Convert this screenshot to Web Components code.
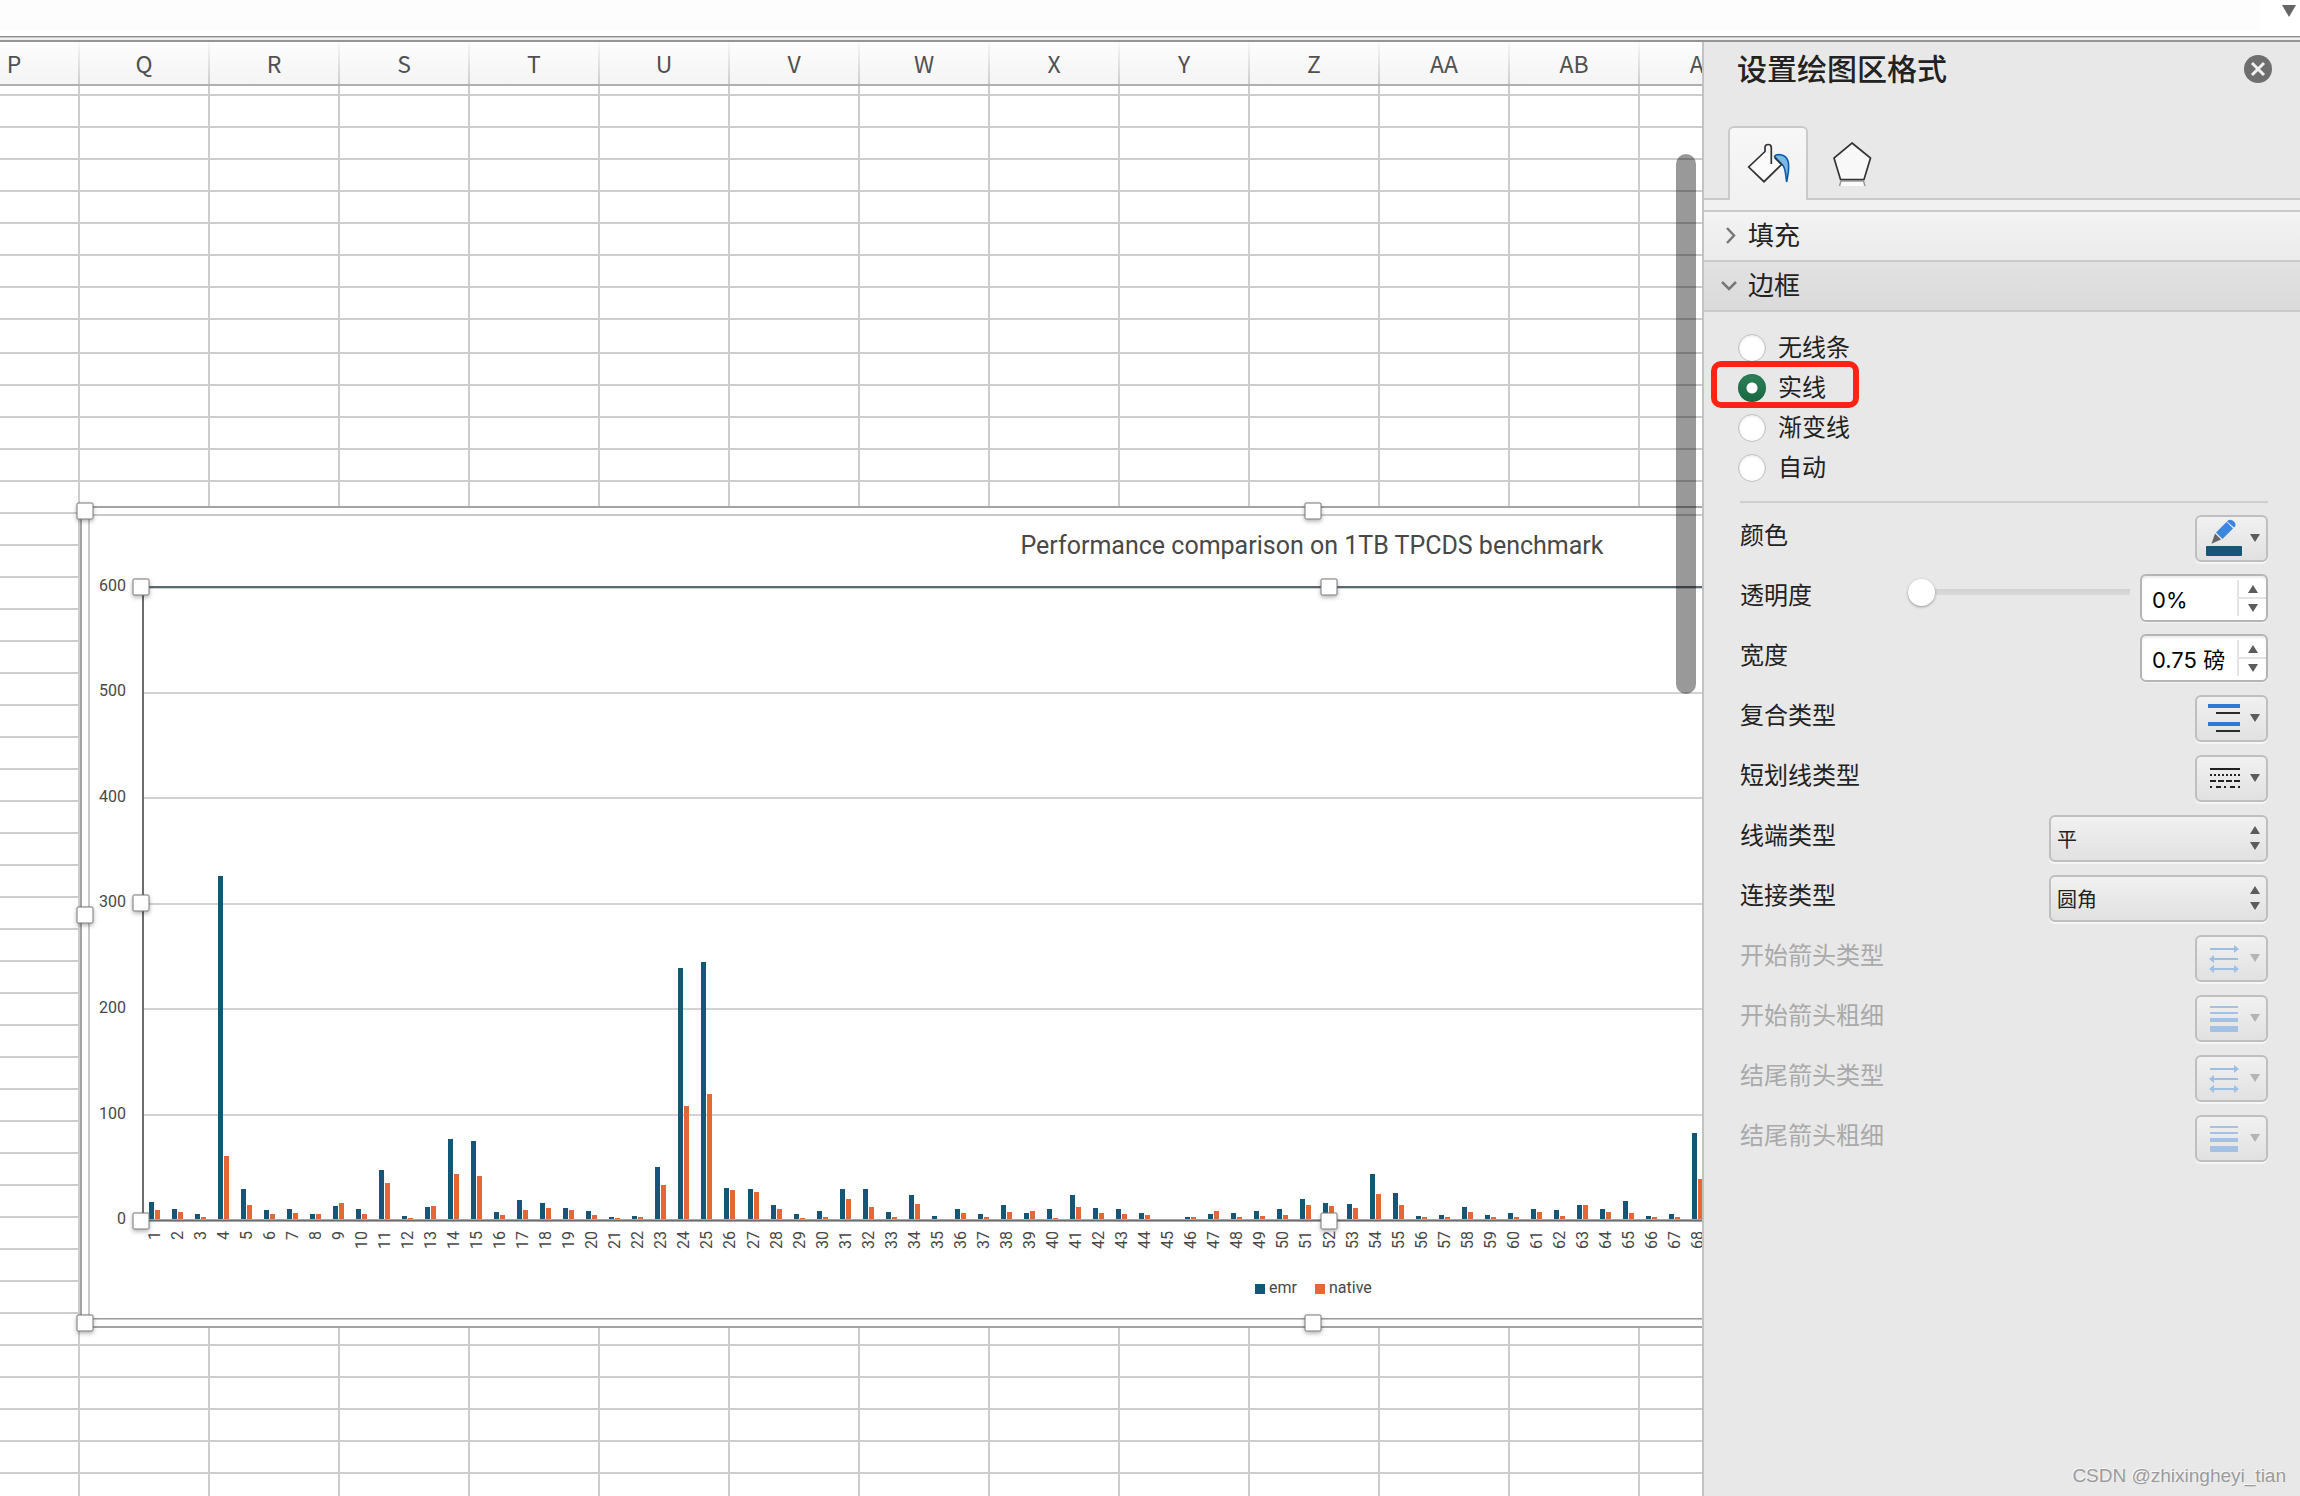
<!DOCTYPE html>
<html lang="zh-CN">
<head>
<meta charset="utf-8">
<title>设置绘图区格式</title>
<style>
  html, body { margin: 0; height: 100%; }
  body { font-family: "Noto Sans CJK SC", sans-serif; background: #fff; overflow: hidden; }
</style>
</head>
<body>
<excel-window></excel-window>
<script>
class ShadowElement extends HTMLElement {
  connectedCallback() {
    if (this.shadowRoot) return;
    this.attachShadow({ mode: "open" }).innerHTML = "<style>*{box-sizing:border-box}</style>" + this.render();
  }
  attr(name) { return this.getAttribute(name) || ""; }
}

customElements.define("excel-window", class extends ShadowElement {
  render() {
    return `<style>
      :host { display: flex; flex-direction: column; height: 100vh; }
      main { display: flex; flex: 1; min-height: 0; }
      sheet-view { flex: 1; min-width: 0; }
      format-pane { flex: none; width: 598px; }
    </style>
    <formula-bar></formula-bar>
    <main><sheet-view></sheet-view><format-pane></format-pane></main>`;
  }
});

customElements.define("formula-bar", class extends ShadowElement {
  render() {
    return `<style>
      :host { display: flex; flex-direction: column; height: 42px; flex: none; background: #fff; }
      .bar { display: flex; height: 36px; }
      .field { flex: 1; height: 30px; background: #fdfdfd; }
      button { width: 40px; height: 24px; padding: 0 4px 3px 0; border: 0; background: none; display: flex; justify-content: flex-end; align-items: center; }
      .split { height: 6px; border-top: 1px solid #8c8c8c; border-bottom: 2px solid #959595; background: linear-gradient(#c9c9c9 1px, #f0f0f0 1px); }
    </style>
    <div class="bar"><div class="field"></div>
      <button aria-label="展开编辑栏"><svg width="14" height="12"><path d="M0 0H14L7 12Z" fill="#666"/></svg></button></div>
    <div class="split"></div>`;
  }
});

customElements.define("sheet-view", class extends ShadowElement {
  render() {
    const columns = ["P","Q","R","S","T","U","V","W","X","Y","Z","AA","AB","AC"];
    const rows = Array.from({ length: 44 }, (_, i) =>
      `<div class="row${i === 0 ? " first" : i === 8 ? " tall" : ""}"></div>`).join("");
    return `<style>
      :host { display: flex; flex-direction: column; position: relative; overflow: hidden; background: #fff; }
      .head { display: flex; flex: none; height: 44px; margin-left: -50px; border-bottom: 2px solid #b0b0b0; background: linear-gradient(#fdfdfd, #f4f4f4); }
      .head span { flex: none; width: 130px; padding-right: 2px; text-align: center; font-size: 23px; line-height: 42px; color: #505050;
        background: linear-gradient(#f8f8f8, #cdcdcd) right / 2px 100% no-repeat; }
      .grid { position: relative; flex: 1; min-height: 0;
        background: repeating-linear-gradient(90deg, transparent 0 128px, #cdcdcd 128px 130px) -50px 0 / calc(100% + 50px) 100%; }
      .row { height: 32px; border-bottom: 2px solid #cdcdcd; }
      .first { height: 10px; } .tall { height: 34px; }
      chart-object { position: absolute; left: 80px; top: 420px; }
      .thumb { position: absolute; right: 6px; top: 68px; width: 20px; height: 540px; border-radius: 10px; background: rgba(0,0,0,.4); }
    </style>
    <div class="head">${columns.map(c => `<span>${c}</span>`).join("")}</div>
    <div class="grid">${rows}<chart-object></chart-object><div class="thumb"></div></div>`;
  }
});

customElements.define("chart-object", class extends ShadowElement {
  render() {
    const emr = [18,11,6,344,31,10,11,6,14,11,50,4,13,81,79,8,20,17,12,9,3,4,53,252,258,32,31,15,6,9,31,31,8,25,4,11,6,15,7,11,25,12,11,7,0,3,6,7,9,11,21,17,16,46,27,4,5,13,5,7,11,10,15,11,19,4,6,87];
    const native = [10,8,3,64,15,6,7,6,17,6,37,2,14,46,44,5,10,12,10,5,2,3,35,114,126,30,28,11,2,3,21,13,3,16,1,7,3,8,9,2,13,7,6,5,0,3,9,3,4,5,15,14,12,26,15,3,3,8,3,3,8,4,15,8,7,3,3,41];
    const step = 2373 / 103, left = 63, base = 714;
    const gridTops = [609, 503, 398, 292, 187];
    let marks = "";
    gridTops.forEach(y => { marks += `<rect x="${left}" y="${y - 1}" width="2373" height="2" fill="#d2d2d2"/>`; });
    emr.forEach((h, i) => {
      const x = Math.floor(left + 6 + i * step), n = native[i];
      marks += `<rect x="${x}" y="${base - h}" width="5" height="${h}" fill="#155676"/>`;
      marks += `<rect x="${x + 6}" y="${base - n}" width="5" height="${n}" fill="#e66736"/>`;
    });
    let labels = "";
    emr.forEach((_, i) => {
      const x = Math.round(left + step * (i + .5));
      labels += `<text transform="translate(${x + 5} 725) rotate(-90)" text-anchor="end">${i + 1}</text>`;
    });
    [0,100,200,300,400,500,600].forEach((v, i) => {
      labels += `<text x="46" y="${[718,613,507,401,296,190,85][i]}" text-anchor="end">${v}</text>`;
    });
    const handle = (x, y) => `<rect x="${x - 8}" y="${y - 8}" width="16" height="16" rx="1" fill="#fff" stroke="#777" stroke-width="1" filter="url(#s)"/>`;
    const handles = [[5,5],[1233,5],[5,409],[5,817],[1233,817],[61,81],[1249,81],[61,397],[61,715],[1249,715]];
    return `<style>
      :host { display: block; width: 2466px; height: 822px; background: #fff; }
      svg { display: block; overflow: visible; font-family: Roboto, sans-serif; font-size: 16px; fill: #484848; }
      .title { font-size: 25px; }
    </style>
    <svg width="2466" height="822" role="img" aria-label="Performance comparison on 1TB TPCDS benchmark">
      <defs><filter id="s" x="-50%" y="-50%" width="200%" height="200%"><feDropShadow dx="0" dy="2" stdDeviation="2" flood-opacity=".3"/></filter></defs>
      <rect x="1" y="1" width="2464" height="820" fill="#fff" stroke="#a3a3a3" stroke-width="2"/>
      <rect x="9" y="9" width="2448" height="804" fill="#fff" stroke="#c9c9c9" stroke-width="2"/>
      <rect x="9" y="812" width="2448" height="1" fill="#9c9c9c"/>
      <text class="title" x="1232" y="48" text-anchor="middle">Performance comparison on 1TB TPCDS benchmark</text>
      ${marks}
      <rect x="62" y="80" width="2374" height="2" fill="#5b6b75"/><rect x="64" y="82" width="2372" height="1" fill="#d0d0d0"/>
      <rect x="62" y="80" width="2" height="634" fill="#6d6d6d"/>
      <rect x="62" y="713" width="2374" height="3" fill="#a8a8a8"/><rect x="62" y="714" width="2374" height="1" fill="#6b6b6b"/>
      ${handles.map(p => handle(...p)).join("")}
      ${labels}
      <rect x="1175" y="778" width="10" height="10" fill="#155676"/><text x="1189" y="787">emr</text>
      <rect x="1235" y="778" width="10" height="10" fill="#e66736"/><text x="1249" y="787">native</text>
    </svg>`;
  }
});

customElements.define("format-pane", class extends ShadowElement {
  render() {
    return `<style>
      :host { display: flex; flex-direction: column; position: relative; background: #e8e8e8; border-left: 2px solid #c2c2c2; color: #222; }
      header { display: flex; justify-content: space-between; align-items: center; height: 54px; padding: 0 28px 0 33px; }
      h1 { margin: 0; padding-bottom: 4px; font-size: 30px; line-height: 50px; font-weight: 500; }
      header button { width: 28px; height: 28px; padding: 0; border: 0; background: none; }
      svg { display: block; }
      pane-tabs { margin-top: 30px; }
      .body { padding: 16px 32px 0 34px; }
      hr { margin: 13px 0 5px 2px; border: 0; height: 2px; background: #cfcfcf; }
      .rows { padding-left: 2px; }
      .mark { position: absolute; right: 14px; bottom: 6px; font: 19px/28px "Liberation Sans", sans-serif; color: #9b9b9b; text-shadow: -1px -1px 0 #f8f8f8; }
    </style>
    <header><h1>设置绘图区格式</h1>
      <button aria-label="关闭"><svg width="28" height="28"><circle cx="14" cy="14" r="14" fill="#6e6e6e"/><path d="M8 8L20 20M20 8L8 20" stroke="#f0f0f0" stroke-width="3"/></svg></button></header>
    <pane-tabs></pane-tabs>
    <pane-section>填充</pane-section>
    <pane-section open>边框</pane-section>
    <div class="body">
      <line-choice></line-choice>
      <hr>
      <div class="rows">
        <menu-row label="颜色" icon="pen"></menu-row>
        <stepper-row label="透明度" value="0%" slider></stepper-row>
        <stepper-row label="宽度" value="0.75 磅"></stepper-row>
        <menu-row label="复合类型" icon="compound"></menu-row>
        <menu-row label="短划线类型" icon="dash"></menu-row>
        <select-row label="线端类型" value="平"></select-row>
        <select-row label="连接类型" value="圆角"></select-row>
        <menu-row label="开始箭头类型" icon="arrows" disabled></menu-row>
        <menu-row label="开始箭头粗细" icon="weights" disabled></menu-row>
        <menu-row label="结尾箭头类型" icon="arrows" disabled></menu-row>
        <menu-row label="结尾箭头粗细" icon="weights" disabled></menu-row>
      </div>
    </div>
    <div class="mark">CSDN @zhixingheyi_tian</div>`;
  }
});

customElements.define("pane-tabs", class extends ShadowElement {
  render() {
    return `<style>
      :host { display: block; height: 86px; background: #f1f1f1; border-bottom: 2px solid #cacaca; }
      nav { display: flex; height: 74px; padding-left: 24px; background: #e8e8e8; box-shadow: inset 0 -2px #cacaca; }
      button { width: 80px; height: 74px; padding: 0; border: 2px solid transparent; border-bottom: 0; background: none; }
      button.on { border-color: #cacaca; border-radius: 6px 6px 0 0; background: linear-gradient(#f7f7f7, #f1f1f1); }
      svg { display: block; }
    </style>
    <nav role="tablist">
      <button class="on" role="tab" aria-selected="true" aria-label="填充与线条"><svg width="76" height="72" viewBox="10 8 76 72">
        <path d="M44.7 31.5L28.7 47L44 61.5L61 44.5L54 37" fill="#fbfbfb"/>
        <path d="M54.5 36.5C56 34 65 33 68 41C70 49 67.5 56 66.700 62C65.500 56 66 47 62 44.500Z" fill="#7db9e8" stroke="#0a5ca8" stroke-width="1.600"/>
        <path d="M51.300 44V27.500C51.300 23.500 45 23.500 45 27.500V31.500L28.700 47L44 61.700L61.500 44.500L54.500 37.500" fill="none" stroke="#333" stroke-width="1.700"/>
      </svg></button>
      <button role="tab" aria-label="效果"><svg width="76" height="72" viewBox="90 8 76 72">
        <path d="M119.500 66L121 61H143.500L145 66" fill="#fafafa" stroke="#999" stroke-width="1.500"/>
        <path d="M132 23L150.500 38L144 59.500H120.500L114 38Z" fill="#f8f8f8" stroke="#333" stroke-width="1.700"/>
      </svg></button>
    </nav>`;
  }
});

customElements.define("pane-section", class extends ShadowElement {
  render() {
    const open = this.hasAttribute("open");
    return `<style>
      :host { display: block; }
      button { display: flex; align-items: center; gap: 9px; width: 100%; height: 50px; padding: 0 0 2px 15px; border: 0; border-bottom: 2px solid #cacaca; color: #222;
        font: 26px/40px "Noto Sans CJK SC", sans-serif; background: ${open ? "linear-gradient(#e2e2e2,#dadada)" : "linear-gradient(#f3f3f3,#ebebeb)"}; }
      span { padding-bottom: 3px; }
    </style>
    <button aria-expanded="${open}"><svg width="20" height="20"><path d="${open ? "M3 7L10 14L17 7" : "M8 3L15 10.500L8 18"}" fill="none" stroke="#777" stroke-width="2.500"/></svg><span><slot></slot></span></button>`;
  }
});

customElements.define("line-choice", class extends ShadowElement {
  render() {
    const choices = ["无线条", "实线", "渐变线", "自动"];
    return `<style>
      :host { display: block; }
      fieldset { margin: 0; padding: 0; border: 0; }
      div { position: relative; display: flex; align-items: center; height: 40px; gap: 12px; }
      label { font-size: 24px; line-height: 36px; padding-bottom: 5px; }
      input { appearance: none; width: 28px; height: 28px; margin: 0; border-radius: 50%; border: 1px solid #c0c0c0; background: #fff; box-shadow: inset 0 1px 3px rgba(0,0,0,.12); }
      input:checked { border: 0; background: radial-gradient(circle, #fff 0 5px, transparent 6px), linear-gradient(#2f8159, #176841); }
      .note { position: absolute; left: -27px; top: -7px; width: 148px; height: 47px; border: 6px solid #fe2315; border-radius: 10px; }
    </style>
    <fieldset aria-label="线条">${choices.map((c, i) => `<div><input type="radio" name="line" id="r${i}"${i === 1 ? " checked" : ""}><label for="r${i}">${c}</label>${i === 1 ? '<span class="note"></span>' : ""}</div>`).join("")}</fieldset>`;
  }
});

const rowStyle = `
  :host { display: flex; justify-content: space-between; align-items: center; height: 60px; }
  label { font-size: 24px; line-height: 36px; padding-bottom: 9px; color: #222; }
  :host([disabled]) label { color: #aaa; }
  .face { border: 2px solid #bfbfbf; border-radius: 6px; background: linear-gradient(#f1f1f1, #e1e1e1); box-shadow: 0 2px 0 #f6f6f6; }
`;

const icons = {
  pen: `<path d="M16.500 28.700L20 18.500L26 24.500Z" fill="#666"/><path d="M21 17.500L31.500 7L38 13.500L27.500 24Z" fill="#3a87dd"/><path d="M33 5.500C36 2.500 42.500 8 40 11.500L39 12.500L32 6.500Z" fill="#3a87dd"/><rect x="11" y="31" width="36" height="10" rx="1" fill="#155676"/>`,
  compound: `<path d="M13 11H45M13 29H45" stroke="#2e7ad3" stroke-width="4"/><path d="M21 18H45M21 36H45" stroke="#2b2b2b" stroke-width="2"/>`,
  dash: `<g stroke="#222" stroke-width="2"><path d="M15 14H45"/><path d="M15 20H45" stroke-dasharray="2 2"/><path d="M15 26H45" stroke-dasharray="6 2"/><path d="M15 32H45" stroke-dasharray="2 4 5 3"/></g>`,
  arrows: `<path d="M15 14H40M18 24H43M18 34H40" stroke="#9dbfe2" stroke-width="2"/><path d="M39 10L44 14L39 18ZM19 20L14 24L19 28ZM19 30L14 34L19 38ZM39 30L44 34L39 38Z" fill="#9dbfe2"/>`,
  weights: `<path d="M15 11H43V13H15ZM15 17H43V19H15ZM15 23H43V27H15ZM15 31H43V37H15Z" fill="#a3c1e2"/>`
};

customElements.define("menu-row", class extends ShadowElement {
  render() {
    const off = this.hasAttribute("disabled");
    return `<style>${rowStyle}
      button { width: 73px; height: 47px; padding: 0; }
      svg { display: block; margin: -2px; }
    </style>
    <label for="b">${this.attr("label")}</label>
    <button id="b" class="face"${off ? " disabled" : ""}><svg width="73" height="47">${icons[this.attr("icon")]}<path d="M55 19H65L60 27Z" fill="${off ? "#b4b4b4" : "#5c5c5c"}"/></svg></button>`;
  }
});

customElements.define("stepper-row", class extends ShadowElement {
  render() {
    const slider = this.hasAttribute("slider")
      ? `<input type="range" min="0" max="100" value="0" aria-label="${this.attr("label")}">` : "";
    return `<style>${rowStyle}
      .set { display: flex; align-items: center; gap: 10px; }
      .box { display: flex; width: 128px; height: 48px; border: 2px solid #b5b5b5; border-radius: 6px; background: #fff; box-shadow: inset 0 2px 2px rgba(0,0,0,.08), 0 1px 0 #f4f4f4; }
      .box input { flex: 1; min-width: 0; border: 0; padding: 3px 0 0 10px; background: none; color: #000; font: 22px/24px Inter, "Noto Sans CJK SC", sans-serif; outline: 0; }
      .arrows { display: flex; flex-direction: column; width: 29px; margin: 4px 0; border-left: 2px solid #e4e4e4; }
      .arrows button { display: flex; align-items: center; justify-content: center; flex: 1; padding: 0; border: 0; background: none; }
      .arrows button + button { border-top: 2px solid #e4e4e4; }
      input[type=range] { appearance: none; width: 222px; height: 27px; margin: 0 0 12px; background: linear-gradient(#d2d2d2, #dadada) center / 100% 6px no-repeat; border-radius: 3px; }
      input::-webkit-slider-thumb { appearance: none; width: 27px; height: 27px; border-radius: 50%; background: #fff; box-shadow: 0 1px 3px rgba(0,0,0,.35); }
    </style>
    <label for="v">${this.attr("label")}</label>
    <div class="set">${slider}<div class="box"><input id="v" type="text" value="${this.attr("value")}">
      <div class="arrows"><button aria-label="增加"><svg width="10" height="8"><path d="M0 8H10L5 0Z" fill="#5c5c5c"/></svg></button><button aria-label="减少"><svg width="10" height="8"><path d="M0 0H10L5 8Z" fill="#5c5c5c"/></svg></button></div></div></div>`;
  }
});

customElements.define("select-row", class extends ShadowElement {
  render() {
    return `<style>${rowStyle}
      .wrap { position: relative; display: flex; }
      select { appearance: none; width: 219px; height: 47px; padding: 2px 6px; color: #222; font: 20px "Noto Sans CJK SC", sans-serif; }
      svg { position: absolute; right: 8px; top: 11px; pointer-events: none; }
    </style>
    <label for="s">${this.attr("label")}</label>
    <div class="wrap"><select id="s" class="face"><option>${this.attr("value")}</option></select>
      <svg width="10" height="24"><path d="M0 8H10L5 0ZM0 16H10L5 24Z" fill="#5c5c5c"/></svg></div>`;
  }
});
</script>
</body>
</html>
